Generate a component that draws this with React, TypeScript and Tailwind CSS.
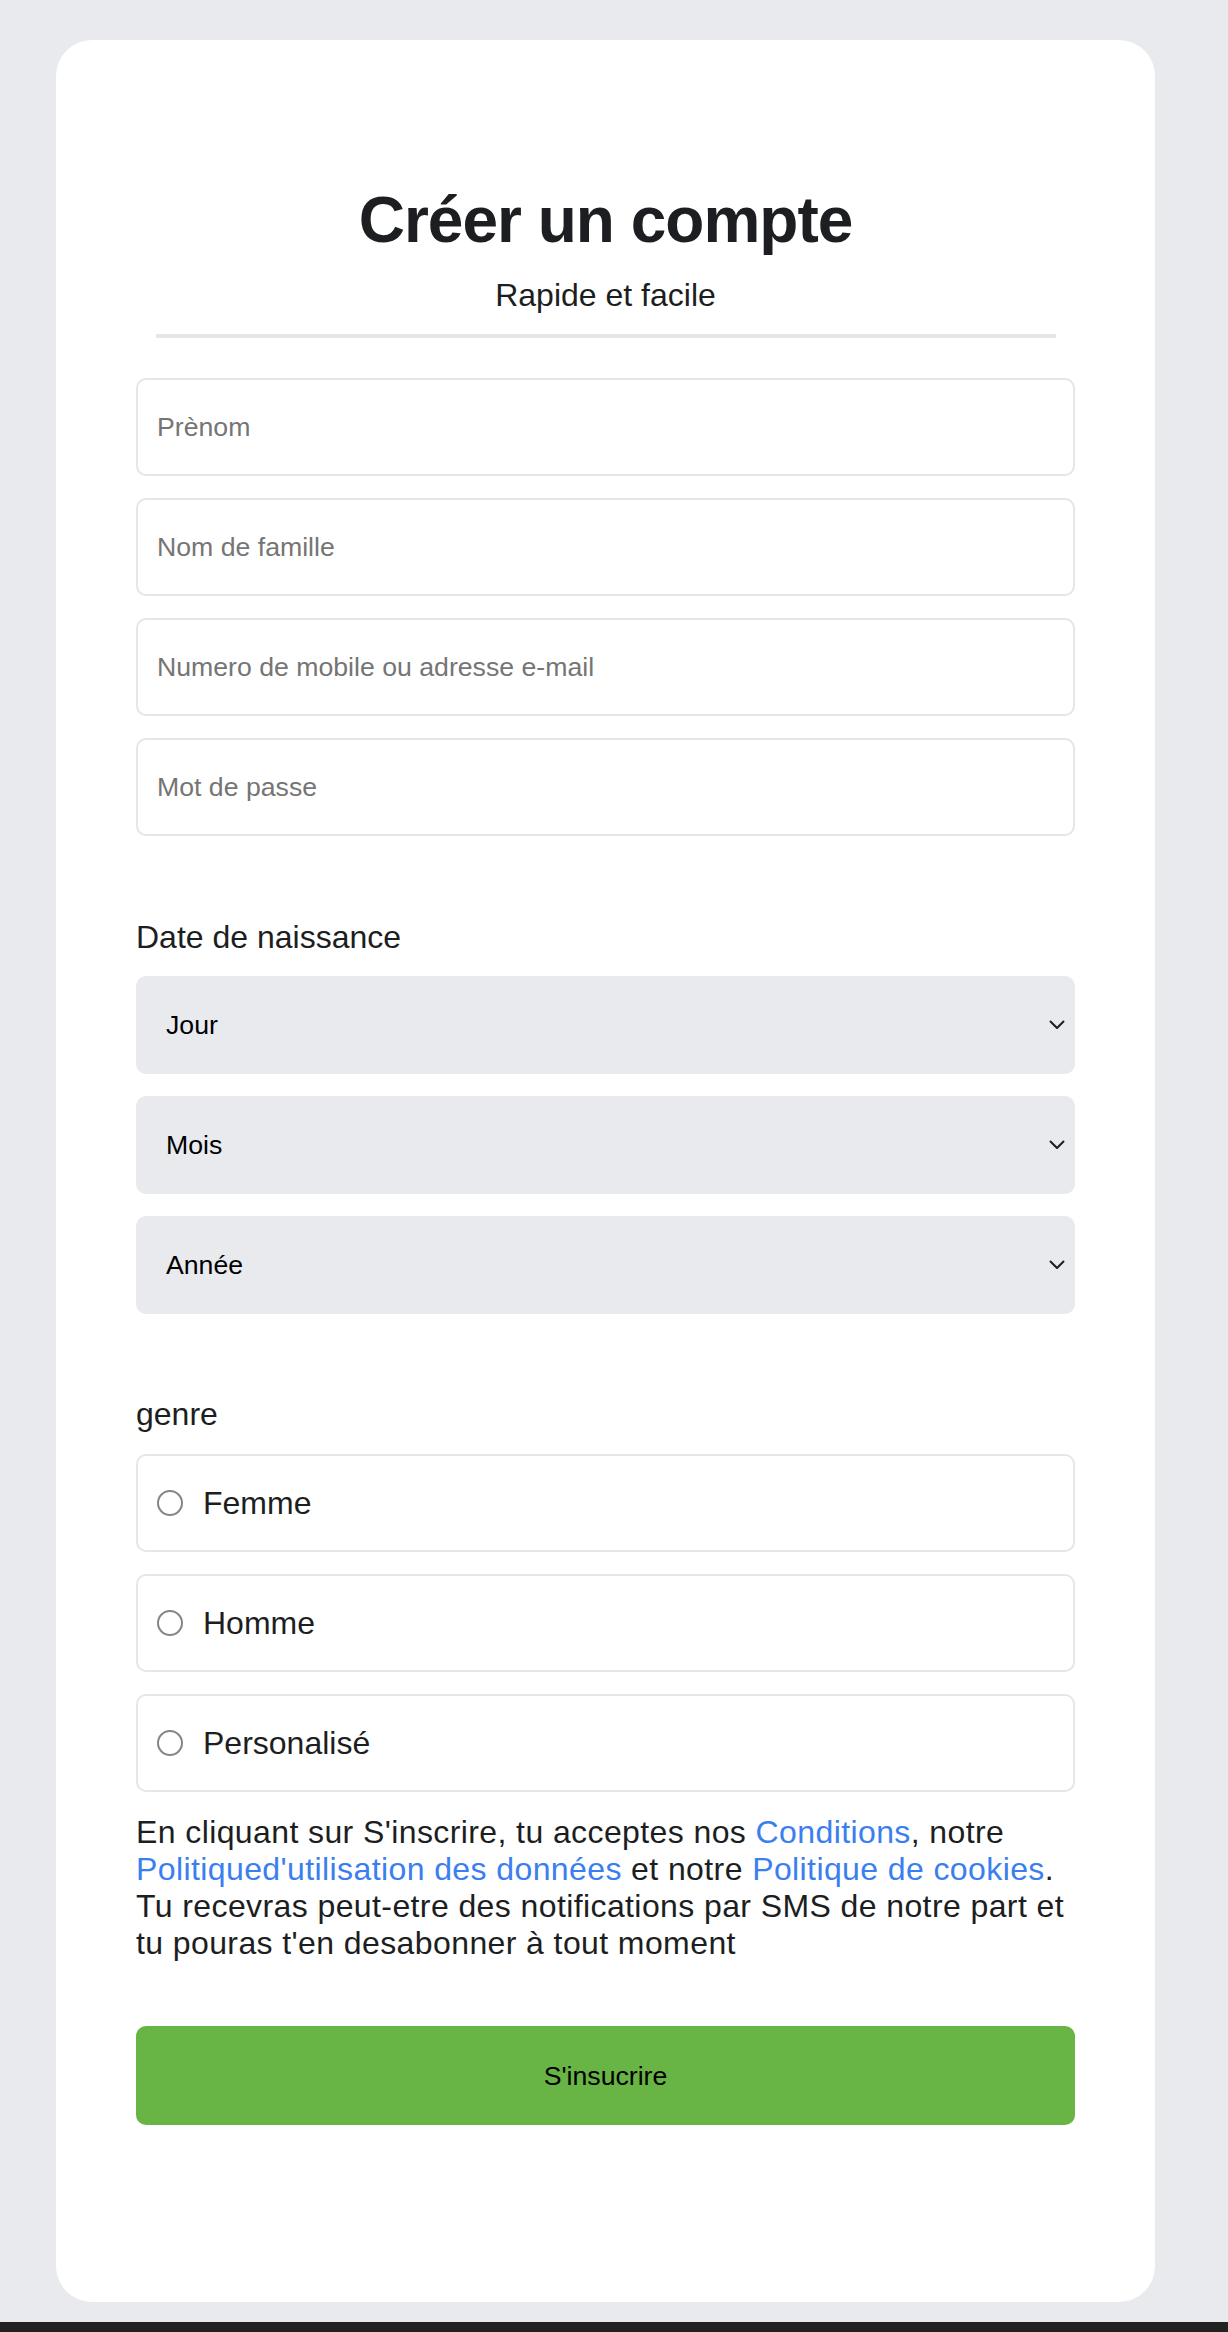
import { useState } from 'react'

const fields = [
  { name: 'prenom', placeholder: 'Prènom', type: 'text' },
  { name: 'nom', placeholder: 'Nom de famille', type: 'text' },
  { name: 'contact', placeholder: 'Numero de mobile ou adresse e-mail', type: 'text' },
  { name: 'password', placeholder: 'Mot de passe', type: 'password' },
]

const dateSelects = ['Jour', 'Mois', 'Année']

const genres = ['Femme', 'Homme', 'Personalisé']

function Chevron() {
  return (
    <svg
      className="pointer-events-none absolute right-[10px] top-1/2 -translate-y-1/2"
      width="16"
      height="10"
      viewBox="0 0 16 10"
      fill="none"
    >
      <path d="M1.5 1.5 8 8l6.5-6.5" stroke="#1f1f1f" strokeWidth="2" strokeLinecap="round" strokeLinejoin="round" />
    </svg>
  )
}

export default function App() {
  const [genre, setGenre] = useState('')

  return (
    <div className="min-h-screen bg-[#e9eaee] font-['Liberation_Sans',Arial,sans-serif] text-[#1c1e21]">
      <div className="pl-[56px] pt-[40px] pb-[20px]">
        <form
          className="flex w-[1099px] flex-col rounded-[36px] bg-white px-[80px] pt-[143px] pb-[177px]"
          onSubmit={(e) => e.preventDefault()}
        >
          <h1 className="text-center text-[64px] font-bold leading-[74px] tracking-[-1px]">
            Créer un compte
          </h1>
          <p className="mt-[20px] text-center text-[32px] leading-[37px]">Rapide et facile</p>
          <div className="mx-auto mt-[20px] h-[4px] w-[900px] bg-[#e6e6ea]" />

          <div className="mt-[40px] flex flex-col gap-[22px]">
            {fields.map((f) => (
              <input
                key={f.name}
                name={f.name}
                type={f.type}
                placeholder={f.placeholder}
                className="h-[98px] w-full rounded-[10px] border-2 border-[#e5e6eb] bg-white px-[19px] text-[26.67px] text-black outline-none placeholder:text-[#757575]"
              />
            ))}
          </div>

          <p className="mt-[83px] text-[32px] leading-[37px]">Date de naissance</p>
          <div className="mt-[20px] flex flex-col gap-[22px]">
            {dateSelects.map((label) => (
              <div key={label} className="relative">
                <select
                  defaultValue=""
                  className="h-[98px] w-full appearance-none rounded-[10px] bg-[#e9eaee] pl-[30px] text-[26.67px] text-black outline-none"
                >
                  <option value="">{label}</option>
                </select>
                <Chevron />
              </div>
            ))}
          </div>

          <p className="mt-[82px] text-[32px] leading-[37px]">genre</p>
          <div className="mt-[21px] flex flex-col gap-[22px]">
            {genres.map((g) => (
              <label
                key={g}
                className="flex h-[98px] items-center gap-[20px] rounded-[10px] border-2 border-[#e5e6eb] px-[19px]"
              >
                <input
                  type="radio"
                  name="genre"
                  checked={genre === g}
                  onChange={() => setGenre(g)}
                  className="h-[26px] w-[26px] appearance-none rounded-full border-2 border-[#858585] bg-white checked:border-[8px] checked:border-[#1877f2]"
                />
                <span className="text-[32px] leading-[37px]">{g}</span>
              </label>
            ))}
          </div>

          <p className="mt-[22px] text-[32px] leading-[37px] tracking-[0.4px]">
            En cliquant sur S'inscrire, tu acceptes nos <a href="#" className="text-[#3a7ef0]">Conditions</a>, notre{' '}
            <a href="#" className="text-[#3a7ef0]">Politiqued'utilisation des données</a> et notre{' '}
            <a href="#" className="text-[#3a7ef0]">Politique de cookies</a>.
            <br />
            Tu recevras peut-etre des notifications par SMS de notre part et tu pouras t'en desabonner à tout moment
          </p>

          <button
            type="submit"
            className="mt-[64px] h-[99px] w-full rounded-[10px] bg-[#68b445] text-[26.67px] text-black"
          >
            S'insucrire
          </button>
        </form>
      </div>
      <div className="h-[10px] bg-[#222222]" />
    </div>
  )
}
